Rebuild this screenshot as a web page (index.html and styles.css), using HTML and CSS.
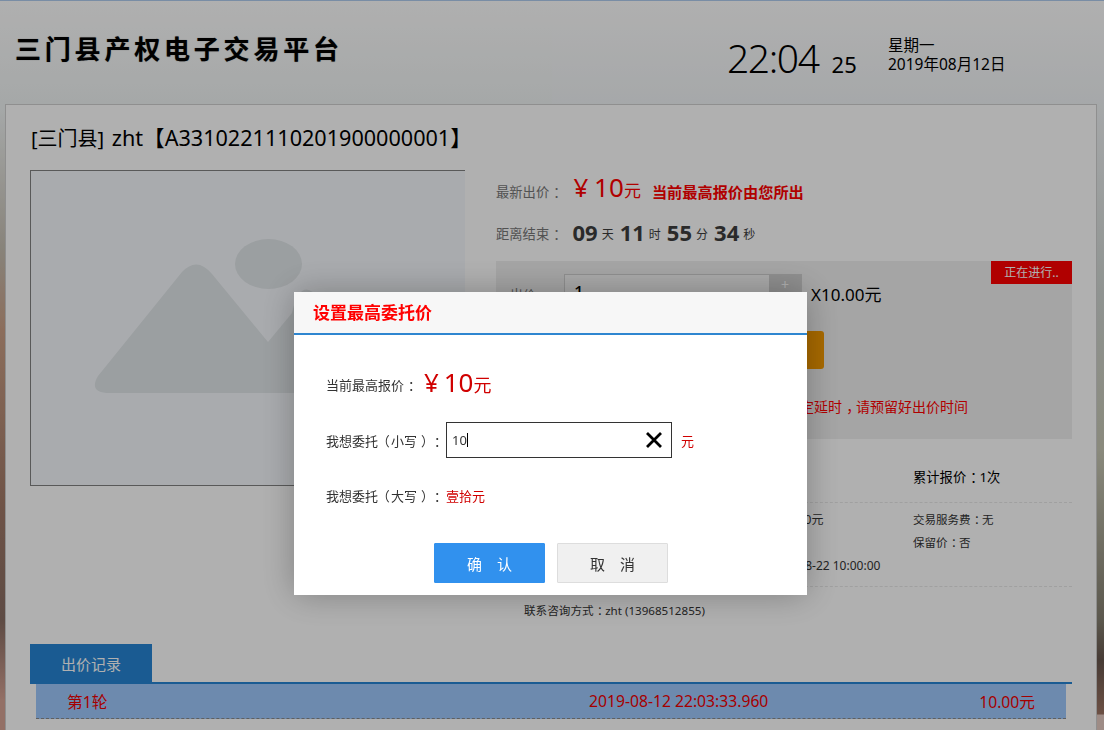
FILE: index.html
```html
<!DOCTYPE html>
<html lang="zh-CN">
<head>
<meta charset="utf-8">
<title>三门县产权电子交易平台</title>
<link rel="stylesheet" href="styles.css">
</head>
<body>
<header class="topbar">
  <h1 class="brand">三门县产权电子交易平台</h1>
  <div class="clock"><span class="clock-main">22:04</span><span class="clock-sec">25</span></div>
  <div class="date"><div>星期一</div><div>2019年08月12日</div></div>
</header>
<main class="panel">
  <h2 class="lot-title"><span class="lot-area">[三门县]</span> zht【A3310221110201900000001】</h2>
  <div class="lot">
    <div class="photo">
      <svg class="photo-art" viewBox="0 0 435 316" width="435" height="316" aria-hidden="true">
        <ellipse cx="238.5" cy="94" rx="33.5" ry="25"/>
        <path d="M68 206 L152 102 Q167 86 182 104 L238 172 L262 143 Q271 104 290 130 L398 208 Q408 223 390 223 L80 223 Q58 223 68 206 Z"/>
      </svg>
    </div>
    <div class="details">
      <div class="price-row">
        <span class="muted-label">最新出价<span class="cp">：</span></span>
        <span class="price"><span class="price-num">¥ 10</span><span class="price-unit">元</span></span>
        <strong class="price-note">当前最高报价由您所出</strong>
      </div>
      <div class="count-row">
        <span class="muted-label">距离结束<span class="cp">：</span></span>
        <b>09</b><small>天</small><b>11</b><small>时</small><b>55</b><small>分</small><b>34</b><small>秒</small>
      </div>
      <section class="bid-box">
        <span class="status-tag">正在进行..</span>
        <div class="bid-line">
          <span class="bid-label">出价</span>
          <div class="stepper"><span class="stepper-value">1</span><span class="stepper-plus">+</span></div>
          <span class="bid-unit">X10.00元</span>
        </div>
        <div class="bid-action"><button class="bid-btn" type="button">出价</button></div>
        <p class="bid-hint">出价会有一定延时<span class="cp">，</span>请预留好出价时间</p>
      </section>
      <div class="stats stats-main">
        <span></span><span></span><span>累计报价<span class="cp">：</span>1次</span>
      </div>
      <div class="stats stats-sub">
        <div></div>
        <div class="stats-mid"><div>加价幅度：1000.00元</div><div>&nbsp;</div><div>结束时间：2019-08-22 10:00:00</div></div>
        <div><div>交易服务费<span class="cp">：</span>无</div><div>保留价<span class="cp">：</span>否</div></div>
      </div>
      <p class="contact">联系咨询方式<span class="cp">：</span>zht (13968512855)</p>
    </div>
  </div>
  <div class="tabs"><span class="tab">出价记录</span></div>
  <div class="record">
    <span>第1轮</span>
    <span>2019-08-12 22:03:33.960</span>
    <span class="record-amount">10.00元</span>
  </div>
</main>

<div class="overlay"></div>
<div class="modal" role="dialog">
  <div class="modal-head">设置最高委托价</div>
  <div class="modal-body">
    <div class="m-row m-row-price">
      <span>当前最高报价<span class="cp">：</span></span>
      <span class="m-price"><span class="m-price-num">¥ 10</span><span class="m-price-unit">元</span></span>
    </div>
    <div class="m-row m-row-input">
      <span>我想委托<span class="op">（</span>小写<span class="cp">）</span><span class="cp">：</span></span>
      <div class="m-input"><span class="m-input-text">10</span><span class="caret"></span>
        <svg class="m-clear" viewBox="0 0 18 18" width="18" height="18" aria-hidden="true"><path d="M2 2 L16 16 M16 2 L2 16"/></svg>
      </div>
      <span class="red m-yuan">元</span>
    </div>
    <div class="m-row m-row-upper">
      <span>我想委托<span class="op">（</span>大写<span class="cp">）</span><span class="cp">：</span></span><span class="red">壹拾元</span>
    </div>
    <div class="m-actions">
      <button class="m-btn m-btn-primary" type="button">确　认</button>
      <button class="m-btn" type="button">取　消</button>
    </div>
  </div>
</div>
</body>
</html>
```
FILE: styles.css
```css
* { box-sizing: border-box; }
html, body { height: 100%; }
body {
  margin: 0;
  height: 730px;
  overflow: hidden;
  display: flex;
  flex-direction: column;
  font-family: "Noto Sans", "Noto Sans CJK SC", sans-serif;
  text-spacing-trim: space-all;
  color: #000;
  border-top: 1px solid #b0cdf0;
  background:
    linear-gradient(180deg, #ffffff 0, #eff3f3 110px, #c5beb1 250px, #cb9f85 330px, #a27a68 500px, #886d63 620px, #d5a294 700px, #d5a294 730px) left top / 50% 100% no-repeat,
    linear-gradient(180deg, #ffffff 0, #f1f4f6 100px, #cfd5d1 300px, #c8c8b5 450px, #858071 620px, #68574e 660px, #9d7463 714px, #e5cbc2 715px, #e5cbc2 730px) right top / 50% 100% no-repeat;
}
/* punctuation sits mid-cell in the reference: half-width glyph plus side margins */
.cp { font-feature-settings: "halt"; margin-left: .3em; margin-right: .2em; }
.op { font-feature-settings: "halt"; margin-left: .4em; margin-right: .1em; }

.topbar {
  height: 103px;
  flex: none;
  display: flex;
  align-items: center;
  padding-left: 15px;
}
.brand {
  margin: -9px 0 0;
  width: 712px;
  font-size: 26px;
  line-height: 36px;
  font-weight: 700;
  letter-spacing: 3.8px;
  color: #000;
  font-family: "Noto Sans CJK SC", sans-serif;
  text-shadow: 0 0 1px rgba(0, 0, 0, .5);
}
.clock { width: 161px; display: flex; align-items: baseline; line-height: 1; margin-top: 10px; }
.clock-main { font-size: 39px; letter-spacing: -1.4px; font-weight: 300; }
.clock-sec { font-size: 22px; margin-left: 13px; }
.date { font-size: 15.5px; line-height: 19px; margin-top: 4px; }

.panel {
  flex: 1;
  margin: 0 7px 0 5px;
  background: #fff;
  border: 1px solid #cfcfcf;
  border-bottom: 0;
  padding: 19px 24px 0;
}
.lot-title {
  margin: 0 0 17px 1px;
  font-size: 21.6px;
  line-height: 28px;
  font-weight: 400;
  word-spacing: 2px;
  white-space: nowrap;
}
.lot-area { font-size: 20px; }
.lot { display: flex; height: 474px; }
.photo {
  width: 435px;
  height: 316px;
  flex: none;
  background: #f5f8fc;
  border: 1px solid #828282;
  border-right: 0;
  overflow: hidden;
}
.photo-art { display: block; margin: -1px 0 0 -1px; fill: #e1e6e9; }

.details { width: 576px; margin-left: 31px; flex: none; }
.muted-label { font-size: 13.3px; color: #777; }
.price-row { height: 42px; display: flex; align-items: center; white-space: nowrap; }
.price { color: #f00; margin: 0 0 8px 11px; display: flex; align-items: baseline; }
.price-num { font-size: 26px; word-spacing: -1px; }
.price-unit { font-size: 17px; }
.price-note { color: #f00; font-size: 15.2px; margin-left: 11px; }
.count-row { height: 49px; display: flex; align-items: center; white-space: nowrap; color: #3e3e3e; padding-bottom: 6px; }
.count-row b { font-size: 22px; margin-left: 6px; line-height: 1; margin-bottom: 4px; }
.count-row .muted-label + b { margin-left: 10px; }
.count-row small { font-size: 12px; margin-left: 4px; }

.bid-box { position: relative; height: 178px; background: #efefef; padding-top: 13px; }
.status-tag {
  position: absolute;
  top: 0;
  right: 0;
  width: 81px;
  height: 23px;
  background: #f00;
  color: #fff;
  font-size: 12px;
  line-height: 23px;
  text-align: center;
}
.bid-line { display: flex; align-items: center; height: 38px; }
.bid-label { width: 68px; padding-left: 14px; font-size: 13px; color: #777; }
.stepper { display: flex; width: 238px; height: 38px; border: 1px solid #d0d0d0; background: #f6f6f6; }
.stepper-value { flex: 1; font-size: 17px; padding-left: 9px; line-height: 34px; font-weight: 500; }
.stepper-plus { width: 32px; background: #cfcfcf; color: #fff; text-align: center; font-size: 14px; line-height: 20px; }
.bid-unit { margin-left: 9px; font-size: 17px; }
.bid-action { padding: 19px 0 0 68px; }
.bid-btn {
  display: block;
  width: 260px;
  height: 38px;
  border: 0;
  border-radius: 3px;
  background: #f39900;
  color: #fff;
  font: inherit;
}
.bid-hint { margin: 26px 0 0 234px; font-size: 14px; line-height: 24px; color: #f00; white-space: nowrap; }

.stats { display: grid; grid-template-columns: 208px 209px 159px; border-bottom: 1px dashed #e8e8e8; }
.stats-main { height: 64px; font-size: 13.3px; line-height: 20px; padding-top: 28px; }
.stats-sub { height: 84px; font-size: 11.5px; line-height: 23px; padding-top: 5px; color: #333; }
.stats-mid { font-size: 12px; margin-left: 3px; white-space: nowrap; }
.contact { margin: 15px 0 0 28px; font-size: 11.6px; line-height: 18px; color: #333; }

.tabs { height: 40px; border-bottom: 2px solid #2685d4; }
.tab {
  display: block;
  width: 122px;
  height: 40px;
  background: #2685d4;
  color: #fff;
  font-size: 15px;
  line-height: 40px;
  text-align: center;
}
.record {
  display: grid;
  grid-template-columns: 522px 1fr auto;
  align-items: center;
  margin: 0 6px;
  height: 35px;
  padding: 0 31px;
  background: #9ec8fc;
  border-bottom: 1px dashed #8a8a8a;
  color: #ee0000;
  font-size: 15.7px;
}

.overlay { position: fixed; inset: 0; background: rgba(0, 0, 0, .31); }
.modal {
  position: fixed;
  left: 294px;
  top: 292px;
  width: 513px;
  height: 303px;
  background: #fff;
  box-shadow: 0 0 34px rgba(0, 0, 0, .28);
  border-radius: 2px 2px 0 0;
}
.modal-head {
  height: 43px;
  padding-left: 19px;
  background: #f7f7f7;
  border-bottom: 2px solid #2e86d0;
  color: #f00;
  font-size: 17px;
  font-weight: 700;
  line-height: 41px;
}
.modal-body { padding: 0 32px; font-size: 13px; color: #333; }
.m-row { display: flex; align-items: center; white-space: nowrap; }
.m-row-price { height: 44px; margin-top: 27px; }
.m-price { color: #d00000; margin: 0 0 5px 7px; display: flex; align-items: baseline; }
.m-price-num { font-size: 26px; word-spacing: -2px; }
.m-price-unit { font-size: 18px; }
.m-row-input { height: 36px; margin-top: 16px; }
.m-row-input > span:first-child { width: 120px; }
.m-input {
  position: relative;
  width: 226px;
  height: 36px;
  border: 1px solid #333;
  padding-left: 5px;
  display: flex;
  align-items: center;
  color: #333;
  font-size: 13px;
}
.caret { width: 1px; height: 14px; background: #000; margin-left: 0; }
.m-clear { position: absolute; right: 8px; top: 8px; fill: none; stroke: #000; stroke-width: 2.8; }
.m-yuan { margin-left: 9px; }
.red { color: #d00000; }
.m-row-upper { height: 20px; margin-top: 27px; }
.m-row-upper > span:first-child { width: 120px; }
.m-actions { display: flex; gap: 12px; margin: 38px 0 0 108px; }
.m-btn {
  width: 111px;
  height: 40px;
  border: 1px solid #ddd;
  border-radius: 1px;
  background: #f0f0f0;
  color: #333;
  font: inherit;
  font-size: 15px;
}
.m-btn-primary { background: #3191ee; border-color: #3191ee; color: #fff; }
```
